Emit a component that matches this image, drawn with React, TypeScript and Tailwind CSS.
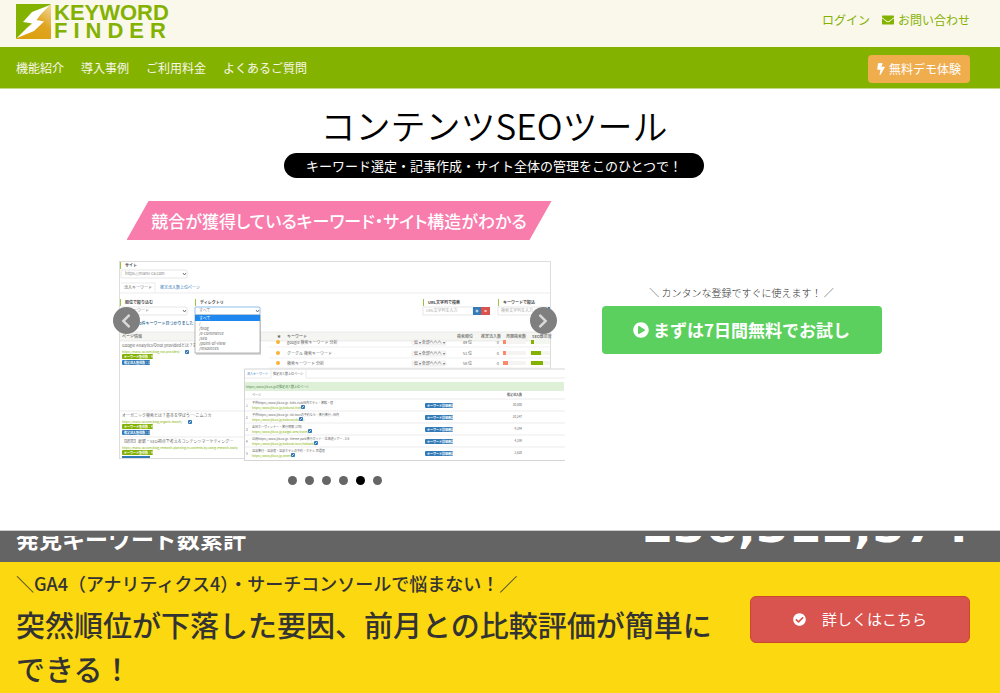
import {
  FaBolt,
  FaCheckCircle,
  FaChevronLeft,
  FaChevronRight,
  FaEnvelope,
  FaPlayCircle,
} from "react-icons/fa";

const navItems = ["機能紹介", "導入事例", "ご利用料金", "よくあるご質問"];

const slideCount = 6;
const activeSlide = 4;

const directories = ["/blog", "/e-commerce", "/seo", "/point-of-view", "/resources"];

const keywordRows = [
  { y: 81, name: "google 検索キーワード 分析", rank: "49 位", load: 3, score: 3 },
  { y: 92, name: "グーグル 検索キーワード", rank: "51 位", load: 3, score: 10 },
  { y: 102, name: "検索キーワード 分析", rank: "58 位", load: 5, score: 12 },
];

const pageRows = [
  {
    y: 85,
    title: "Google Analyticsのnot providedとは？意",
    url: "https://manu-ca.com/blog/not-provided/",
    iconX: 66,
  },
  {
    y: 155,
    title: "オーガニック検索とは？基本を学ぼう…-こムユカ",
    url: "https://manu-ca.com/blog/organic-search/",
    iconX: 69,
  },
  {
    y: 181,
    title: "【研究】最新・SEO視点で考えるコンテンツマーケティング…",
    url: "https://manu-ca.com/blog/research-planning-in-contents-by-using-research-tools/",
    iconX: 130,
  },
];

const rankingRows = [
  { y: 144, title: "子供https://www.jtb.co.jp : kids-club国内ホテル・旅館・宿", path: "kokunai-hotel/", count: "30,000", iconX: 182 },
  { y: 156, title: "子供https://www.jtb.co.jp : ski-tourの予約なら・旅行旅行 : 国内", path: "kokunai/dome/", count: "20,247", iconX: 180 },
  { y: 168, title: "全国ホーヴィンナー・旅行情報 [JTB]", path: "kaigai-area/travel/", count: "9,294", iconX: 189 },
  { y: 180, title: "公開https://www.jtb.co.jp : theme-park旅行ガイド・北海道ツアー - 3-6", path: "kokunai-tour/hokkaido/", count: "4,259", iconX: 195 },
  { y: 192, title: "温泉旅行・温泉宿・温泉ホテルの予約・ホテル 百選宿", path: "onsen/", count: "2,620", iconX: 172 },
];

export default function App() {
  return (
    <div className="min-h-screen bg-white font-['Noto_Sans_CJK_JP',sans-serif] text-[#333]">
      <Header />
      <main>
        <div className="flex flex-col items-center pt-[18px] pr-3">
          <h1 className="text-[35px] leading-9 font-[350] text-black">コンテンツSEOツール</h1>
          <p className="mt-2.5 rounded-full bg-black px-[22px] text-[13px] leading-[25px] text-white">
            キーワード選定・記事作成・サイト全体の管理をこのひとつで！
          </p>
        </div>
        <div className="mt-[23px] flex justify-center gap-[37px] pb-[45px]">
          <Carousel />
          <div className="mt-[82px] w-[280px] text-center">
            <p className="text-[10px] leading-5 font-light">＼ カンタンな登録ですぐに使えます！ ／</p>
            <button
              type="button"
              className="mt-[3px] flex h-12 w-full items-center justify-center gap-1 rounded-sm bg-[#5cd05e] text-[17px] font-bold text-white"
            >
              <FaPlayCircle className="size-4" />
              まずは7日間無料でお試し
            </button>
          </div>
        </div>
      </main>
      <Counter />
      <Promo />
    </div>
  );
}

function Header() {
  return (
    <header className="text-xs">
      <div className="flex h-[47px] items-start justify-between bg-[#faf7eb] pr-[30px] pl-4">
        <a href="#" className="mt-1 flex gap-[3px]">
          <LogoMark />
          <span className="flex flex-col font-['Liberation_Sans',sans-serif] text-[22px] leading-[18px] font-bold text-[#84b201]">
            <span>KEYWORD</span>
            <span className="tracking-[6px]">FINDER</span>
          </span>
        </a>
        <div className="flex h-10 items-center gap-3 text-[#84b201]">
          <a href="#">ログイン</a>
          <a href="#" className="flex items-center gap-1">
            <FaEnvelope className="size-3" />
            お問い合わせ
          </a>
        </div>
      </div>
      <nav className="flex h-[42px] items-center justify-between border-b border-[#c3d889] bg-[#84b201] pr-[30px] pl-4 text-[#faf7eb]">
        <ul className="flex gap-[17px]">
          {navItems.map((item) => (
            <li key={item}>
              <a href="#">{item}</a>
            </li>
          ))}
        </ul>
        <button
          type="button"
          className="mt-0.5 flex h-7 items-center gap-1 rounded-sm bg-[#f0ad4e] px-[9px] text-white"
        >
          <FaBolt className="h-3 w-2" />
          無料デモ体験
        </button>
      </nav>
    </header>
  );
}

function LogoMark() {
  return (
    <svg width="35" height="35" viewBox="0 0 35 35" aria-hidden="true">
      <defs>
        <linearGradient id="gold" x1="1" y1="0" x2="0.3" y2="1">
          <stop offset="0" stopColor="#f3d9a0" />
          <stop offset="0.5" stopColor="#dfa520" />
          <stop offset="1" stopColor="#dca00c" />
        </linearGradient>
      </defs>
      <path d="M0 0H35L0 35Z" fill="#84b201" />
      <path d="M35 0V35H0Z" fill="url(#gold)" />
      <path d="M34 1L16 8L7 18L16.500 19.500L11 24L1 34L18 27L28 17.500L20.500 16L25 10Z" fill="#fff" />
    </svg>
  );
}

function Carousel() {
  return (
    <section className="w-[446px]">
      <div className="ml-2 flex h-[39px] w-[425px] items-center justify-center bg-[#f87cac] text-[17px] font-medium text-white [clip-path:polygon(22px_0,100%_0,403px_100%,0_100%)] [font-feature-settings:'palt']">
        競合が獲得しているキーワード・サイト構造がわかる
      </div>
      <div className="relative mt-[21px]">
        <SlideImage />
        <button
          type="button"
          aria-label="前へ"
          className="absolute top-[46px] -left-1.5 flex size-[27px] items-center justify-center rounded-full bg-[#7f7f7f] text-[#d9d9d9]"
        >
          <FaChevronLeft className="size-4" />
        </button>
        <button
          type="button"
          aria-label="次へ"
          className="absolute top-[46px] right-2 flex size-[27px] items-center justify-center rounded-full bg-[#7f7f7f] text-[#d9d9d9]"
        >
          <FaChevronRight className="size-4" />
        </button>
      </div>
      <div className="mt-[15px] mr-3.5 flex justify-center gap-2">
        {[...Array(slideCount)].map((_, i) => (
          <button
            key={i}
            type="button"
            aria-label={`スライド ${i + 1}`}
            className={`size-[9px] rounded-full ${i === activeSlide ? "bg-black" : "bg-[#666]"}`}
          />
        ))}
      </div>
    </section>
  );
}

function Badge({ x, y, w, color, label }: { x: number; y: number; w: number; color: string; label: string }) {
  return (
    <g>
      <rect x={x} y={y} width={w} height="5" rx="1" fill={color} />
      <text x={x + 2} y={y + 4} fontSize="3" fontWeight="bold" fill="#fff">
        {label}
      </text>
    </g>
  );
}

function LinkIcon({ x, y }: { x: number; y: number }) {
  return (
    <g>
      <rect x={x} y={y} width="4" height="4" rx="1" fill="#337ab7" />
      <path d={`M${x + 1} ${y + 3}l2-2`} stroke="#fff" strokeWidth="0.7" />
    </g>
  );
}

function FieldLabel({ x, y, label }: { x: number; y: number; label: string }) {
  return (
    <g>
      <rect x={x} y={y} width="1" height="7" fill="#9bc53d" />
      <text x={x + 5} y={y + 5} fontSize="4" fontWeight="bold" fill="#444">
        {label}
      </text>
    </g>
  );
}

function SelectBox({ x, y, w, label, stroke = "#ddd" }: { x: number; y: number; w: number; label: string; stroke?: string }) {
  return (
    <g>
      <rect x={x} y={y} width={w} height="8" rx="1" fill="#fff" stroke={stroke} strokeWidth="0.7" />
      <text x={x + 4} y={y + 5} fontSize="4" fill="#888">
        {label}
      </text>
      <path d={`M${x + w - 4} ${y + 3}l1.500 2l1.500-2`} fill="none" stroke="#555" strokeWidth="0.8" />
    </g>
  );
}

// Miniature of the analysis screen shown on the slide
function SlideImage() {
  return (
    <svg width="446" height="200" viewBox="0 0 446 200" className="block" fill="#666">
      <rect x="0.5" y="0.5" width="431" height="197" fill="#fff" stroke="#ddd" />
      <FieldLabel x={1} y={1} label="サイト" />
      <SelectBox x={2} y={9} w={66} label="https://manu-ca.com" />
      <path d="M0 32H431M36 32V22H2" fill="none" stroke="#e4e4e4" strokeWidth="0.7" />
      <text x="5" y="28" fontSize="4">流入キーワード</text>
      <text x="41" y="28" fontSize="4" fill="#337ab7">推定流入数上位ページ</text>

      <FieldLabel x={1} y={38} label="順位で絞り込む" />
      <FieldLabel x={76} y={38} label="ディレクトリ" />
      <FieldLabel x={304} y={38} label="URL文字列で検索" />
      <FieldLabel x={379} y={38} label="キーワードで絞込" />
      <SelectBox x={2} y={46} w={66} label="全キーワード" />
      <rect x="304" y="46" width="50" height="8" fill="#fff" stroke="#ddd" strokeWidth="0.7" />
      <text x="307" y="51" fontSize="4" fill="#aaa">URL文字列を入力</text>
      <rect x="354" y="46" width="8" height="8" fill="#337ab7" />
      <circle cx="358" cy="50" r="1" fill="none" stroke="#fff" strokeWidth="0.8" />
      <rect x="362" y="46" width="9" height="8" fill="#d9534f" />
      <path d="M365.500 49l2 2m0-2l-2 2" stroke="#fff" strokeWidth="0.8" />
      <rect x="379" y="46" width="50" height="8" fill="#fff" stroke="#ddd" strokeWidth="0.7" />
      <text x="382" y="51" fontSize="4" fill="#aaa">検索文字列を入力</text>
      <rect x="429" y="46" width="2" height="8" fill="#337ab7" />
      <text x="18" y="64" fontSize="4" fontWeight="500" fill="#28648f">00件キーワード見つかりました</text>

      <rect x="1" y="71" width="430" height="9" fill="#f5f6f1" />
      <path d="M1 71H431M1 80H431" stroke="#e4e4e4" strokeWidth="0.7" />
      <g fontSize="4" fontWeight="500">
        <text x="3" y="77">ページ情報</text>
        <text x="158" y="77">★</text>
        <text x="168" y="77">キーワード</text>
        <text x="338" y="77">検索順位</text>
        <text x="362" y="77">推定流入数</text>
        <text x="387" y="77">月間検索数</text>
        <text x="413" y="77">SEO難易度</text>
      </g>
      {keywordRows.map((row) => (
        <g key={row.y} fontSize="4">
          <path d={`M150 ${row.y + 5}H431`} stroke="#eaeaea" strokeWidth="0.7" />
          <circle cx="159" cy={row.y} r="2" fill="#f9b233" />
          <text x="168" y={row.y + 2}>{row.name}</text>
          <rect x="293" y={row.y - 2} width="34" height="5" rx="1" fill="#f7f7f7" stroke="#e0e0e0" strokeWidth="0.5" />
          <text x="295" y={row.y + 2}>低 ▾ 全部へへへ ▾</text>
          <text x="353" y={row.y + 2} textAnchor="end">{row.rank}</text>
          <text x="380" y={row.y + 2} textAnchor="end">0</text>
          <rect x="384" y={row.y - 2} width="23" height="4" fill="#f6f4f2" />
          <rect x="384" y={row.y - 2} width={row.load} height="4" fill="#fa8a6a" />
          <rect x="412" y={row.y - 2} width="19" height="4" fill="#f4f6f0" />
          <rect x="412" y={row.y - 2} width={row.score} height="4" fill="#84b201" />
        </g>
      ))}

      <path d="M1 150H126M1 176H126" stroke="#e4e4e4" strokeWidth="0.7" />
      {pageRows.map((row) => (
        <g key={row.y}>
          <text x="3" y={row.y + 1} fontSize="4">{row.title}</text>
          <text x="3" y={row.y + 7} fontSize="3" fill="#84b201">{row.url}</text>
          <LinkIcon x={row.iconX} y={row.y + 4} />
          <Badge x={3} y={row.y + 8} w={31} color="#84b201" label="キーワード獲得数：48" />
          {row.y < 180 && <Badge x={3} y={row.y + 14} w={28} color="#337ab7" label="推定流入獲得数：3" />}
        </g>
      ))}
      <rect x="3" y="195" width="28" height="2" fill="#337ab7" />

      <SelectBox x={76} y={46} w={65} label="すべて" stroke="#5aa7e6" />
      <rect x="77" y="54" width="65" height="40" fill="#000" opacity="0.15" />
      <rect x="76" y="54" width="65" height="38" fill="#fff" stroke="#999" strokeWidth="0.7" />
      <rect x="76" y="54" width="65" height="6" fill="#1e88f0" />
      <text x="80" y="59" fontSize="4" fill="#fff">すべて</text>
      <text x="80" y="64" fontSize="4">/</text>
      {directories.map((dir, i) => (
        <text key={dir} x="80" y={69 + i * 5} fontSize="4">
          {dir}
        </text>
      ))}

      <rect x="125" y="108" width="321" height="92" fill="#fff" />
      <path d="M446 108H125.500V199.500H446" fill="none" stroke="#d5d5d5" />
      <path d="M126 117H152V109M187 109V117H446M126 138H446" fill="none" stroke="#e2e2e2" strokeWidth="0.7" />
      <text x="128" y="114" fontSize="3" fill="#337ab7">流入キーワード</text>
      <text x="154" y="114" fontSize="3">推定流入数上位ページ</text>
      <rect x="126" y="121" width="319" height="9" fill="#dff0d8" />
      <text x="127" y="127" fontSize="3" fill="#4c8a4e">https://www.jtb.co.jpの推定流入数上位ページ</text>
      <text x="133" y="135" fontSize="3">ページ</text>
      <text x="403" y="135" fontSize="3" fontWeight="bold" textAnchor="end">推定流入数</text>
      {rankingRows.map((row, i) => (
        <g key={row.y} fontSize="3">
          <text x="127" y={row.y + 2}>{i + 1}</text>
          <text x="133" y={row.y - 1}>{row.title}</text>
          <text x="133" y={row.y + 4} fill="#84b201">https://www.jtb.co.jp/{row.path}</text>
          <LinkIcon x={row.iconX} y={row.y} />
          <Badge x={306} y={row.y - 2} w={28} color="#337ab7" label="キーワード詳細確認" />
          <text x="403" y={row.y + 1} textAnchor="end">{row.count}</text>
          {i < 4 && <path d={`M126 ${row.y + 6}H446`} stroke="#e4e4e4" strokeWidth="0.7" />}
        </g>
      ))}
    </svg>
  );
}

function Counter() {
  return (
    <section className="h-8 border-t border-[#ccc] bg-[#646464] pt-[5px] pr-[30px] pl-4 text-white">
      <div className="flex h-[26px] items-end justify-between overflow-hidden">
        <h2 className="text-[23px] leading-[48px] font-bold">発見キーワード数累計</h2>
        <p className="font-['DejaVu_Sans',sans-serif] text-[47px] leading-[72px] font-bold">136,312,574</p>
      </div>
    </section>
  );
}

function Promo() {
  return (
    <section className="flex min-h-[131px] items-start justify-between bg-[#fbd80f] pr-[30px] pl-4">
      <div className="flex-1 pt-2 font-medium">
        <p className="text-lg leading-[26px]">＼GA4（アナリティクス4）・サーチコンソールで悩まない！／</p>
        <p className="mt-1.5 text-[29px] leading-[44px]">突然順位が下落した要因、前月との比較評価が簡単にできる！</p>
      </div>
      <a
        href="#"
        className="mt-[34px] ml-6 flex h-[47px] w-[220px] items-center justify-center gap-4 rounded-md border border-[#c9482f] bg-[#d9534f] text-[15px] text-white"
      >
        <FaCheckCircle className="size-[13px]" />
        詳しくはこちら
      </a>
    </section>
  );
}
